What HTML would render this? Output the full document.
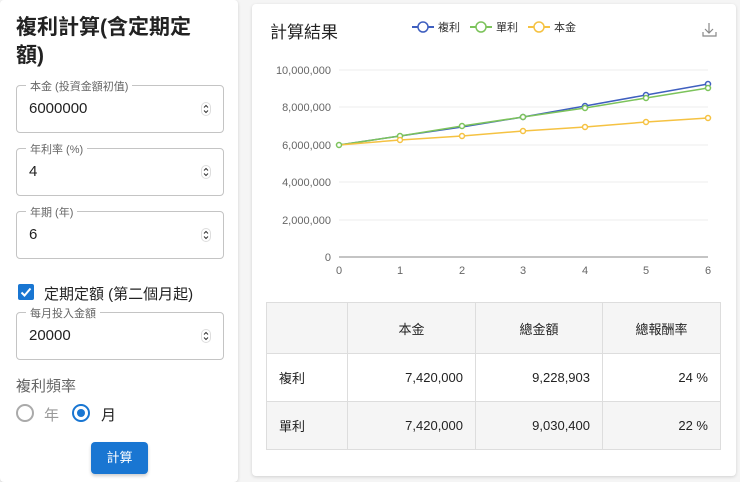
<!DOCTYPE html><html><head><meta charset="utf-8"><style>
*{box-sizing:border-box}body{margin:0;width:740px;height:482px;background:#f5f5f5;font-family:"Liberation Sans","Noto Sans CJK TC",sans-serif;position:relative;overflow:hidden;color:#222}
.card{position:absolute;background:#fff;border-radius:4px;box-shadow:0 1px 3px rgba(0,0,0,.15)}
.fld{position:absolute;left:16px;width:208px;height:48px;border:1px solid #c4c4c4;border-radius:4px}
.fld label{position:absolute;top:-8px;left:9px;background:#fff;padding:0 4px;font-size:11px;color:#666}
.fld span{position:absolute;left:12px;top:14px;font-size:15px}
.fld svg{position:absolute;right:12px;top:16px}
table{position:absolute;left:266px;top:302px;border-collapse:collapse;font-size:13px}
td{border:1px solid #ddd;height:48px;padding:0 12px}
</style></head><body>
<div class="card" style="left:0;top:0;width:238px;height:482px"></div>
<div style="position:absolute;left:16px;top:14px;font-size:21px;font-weight:bold;line-height:28px;width:192px">複利計算(含定期定額)</div>
<div class="fld" style="top:85px"><label>本金 (投資金額初值)</label><span>6000000</span><svg width="10" height="14"><rect x=".5" y=".5" width="9" height="13" rx="4.5" fill="#fff" stroke="#ddd"/><path d="M3 5.5l2-2 2 2M3 8.5l2 2 2-2" fill="none" stroke="#333"/></svg></div>
<div class="fld" style="top:148px"><label>年利率 (%)</label><span>4</span><svg width="10" height="14"><rect x=".5" y=".5" width="9" height="13" rx="4.5" fill="#fff" stroke="#ddd"/><path d="M3 5.5l2-2 2 2M3 8.5l2 2 2-2" fill="none" stroke="#333"/></svg></div>
<div class="fld" style="top:211px"><label>年期 (年)</label><span>6</span><svg width="10" height="14"><rect x=".5" y=".5" width="9" height="13" rx="4.5" fill="#fff" stroke="#ddd"/><path d="M3 5.5l2-2 2 2M3 8.5l2 2 2-2" fill="none" stroke="#333"/></svg></div>
<svg style="position:absolute;left:18px;top:284px" width="16" height="16"><rect width="16" height="16" rx="2" fill="#1976d2"/><path d="M3.5 8.5l3 3 6-7" fill="none" stroke="#fff" stroke-width="2"/></svg>
<div style="position:absolute;left:44px;top:283px;font-size:15px">定期定額 (第二個月起)</div>
<div class="fld" style="top:312px"><label>每月投入金額</label><span>20000</span><svg width="10" height="14"><rect x=".5" y=".5" width="9" height="13" rx="4.5" fill="#fff" stroke="#ddd"/><path d="M3 5.5l2-2 2 2M3 8.5l2 2 2-2" fill="none" stroke="#333"/></svg></div>
<div style="position:absolute;left:16px;top:375px;font-size:15px;color:#666">複利頻率</div>
<div style="position:absolute;left:16px;top:404px;width:18px;height:18px;border:2px solid #aaa;border-radius:50%"></div>
<div style="position:absolute;left:44px;top:404px;font-size:15px;color:#999">年</div>
<div style="position:absolute;left:72px;top:404px;width:18px;height:18px;border:2px solid #1976d2;border-radius:50%"><div style="margin:3px;width:8px;height:8px;background:#1976d2;border-radius:50%"></div></div>
<div style="position:absolute;left:101px;top:404px;font-size:15px">月</div>
<div style="position:absolute;left:91px;top:442px;width:57px;height:32px;background:#1976d2;border-radius:4px;color:#fff;font-size:13px;text-align:center;line-height:32px;box-shadow:0 2px 3px rgba(0,0,0,.2)">計算</div>
<div class="card" style="left:252px;top:4px;width:484px;height:472px"></div>
<div style="position:absolute;left:270px;top:18px;font-size:17px">計算結果</div>
<svg style="position:absolute;left:0;top:0" width="740" height="300" font-family="Liberation Sans,Noto Sans CJK TC,sans-serif">
<g font-size="11" fill="#333">
<line x1="412" y1="27" x2="434" y2="27" stroke="#3f5fbf" stroke-width="2"/><circle cx="423" cy="27" r="5" fill="#fff" stroke="#3f5fbf" stroke-width="1.5"/><text x="438" y="31">複利</text>
<line x1="470" y1="27" x2="492" y2="27" stroke="#7cc35b" stroke-width="2"/><circle cx="481" cy="27" r="5" fill="#fff" stroke="#7cc35b" stroke-width="1.5"/><text x="496" y="31">單利</text>
<line x1="528" y1="27" x2="550" y2="27" stroke="#f5c242" stroke-width="2"/><circle cx="539" cy="27" r="5" fill="#fff" stroke="#f5c242" stroke-width="1.5"/><text x="554" y="31">本金</text></g>
<path d="M709 23v10M705 29l4 4 4-4M703 32v4h13v-4" fill="none" stroke="#888" stroke-width="1.2"/>
<g stroke="#eee"><line x1="339" y1="70" x2="708" y2="70"/><line x1="339" y1="107" x2="708" y2="107"/><line x1="339" y1="145" x2="708" y2="145"/><line x1="339" y1="182" x2="708" y2="182"/><line x1="339" y1="220" x2="708" y2="220"/></g>
<line x1="339" y1="257" x2="708" y2="257" stroke="#888"/>
<g font-size="11" fill="#666" text-anchor="end"><text x="331" y="74">10,000,000</text><text x="331" y="111">8,000,000</text><text x="331" y="149">6,000,000</text><text x="331" y="186">4,000,000</text><text x="331" y="224">2,000,000</text><text x="331" y="261">0</text></g>
<g font-size="11" fill="#666" text-anchor="middle"><text x="339" y="274">0</text><text x="400" y="274">1</text><text x="462" y="274">2</text><text x="523" y="274">3</text><text x="585" y="274">4</text><text x="646" y="274">5</text><text x="708" y="274">6</text></g>
<g fill="#fff" stroke-width="1.5">
<polyline points="339,145 400,136 462,127 523,117 585,106 646,95 708,84" fill="none" stroke="#3f5fbf"/>
<polyline points="339,145 400,136 462,126 523,117 585,108 646,98 708,88" fill="none" stroke="#7cc35b"/>
<polyline points="339,145 400,140 462,136 523,131 585,127 646,122 708,118" fill="none" stroke="#f5c242"/>
<g stroke="#3f5fbf"><circle cx="523" cy="117" r="2.5"/><circle cx="585" cy="106" r="2.5"/><circle cx="646" cy="95" r="2.5"/><circle cx="708" cy="84" r="2.5"/></g>
<g stroke="#7cc35b"><circle cx="339" cy="145" r="2.5"/><circle cx="400" cy="136" r="2.5"/><circle cx="462" cy="126" r="2.5"/><circle cx="523" cy="117" r="2.5"/><circle cx="585" cy="108" r="2.5"/><circle cx="646" cy="98" r="2.5"/><circle cx="708" cy="88" r="2.5"/></g>
<g stroke="#f5c242"><circle cx="400" cy="140" r="2.5"/><circle cx="462" cy="136" r="2.5"/><circle cx="523" cy="131" r="2.5"/><circle cx="585" cy="127" r="2.5"/><circle cx="646" cy="122" r="2.5"/><circle cx="708" cy="118" r="2.5"/></g></g>
</svg>
<table><tr style="background:#f5f5f5;height:51px"><td style="width:81px"></td><td style="width:128px;text-align:center">本金</td><td style="width:127px;text-align:center">總金額</td><td style="width:118px;text-align:center">總報酬率</td></tr>
<tr><td>複利</td><td align="right">7,420,000</td><td align="right">9,228,903</td><td align="right">24 %</td></tr>
<tr style="height:47px"><td style="background:#f5f5f5">單利</td><td align="right" style="background:#f5f5f5">7,420,000</td><td align="right" style="background:#f5f5f5">9,030,400</td><td align="right" style="background:#f5f5f5">22 %</td></tr></table>
</body></html>
